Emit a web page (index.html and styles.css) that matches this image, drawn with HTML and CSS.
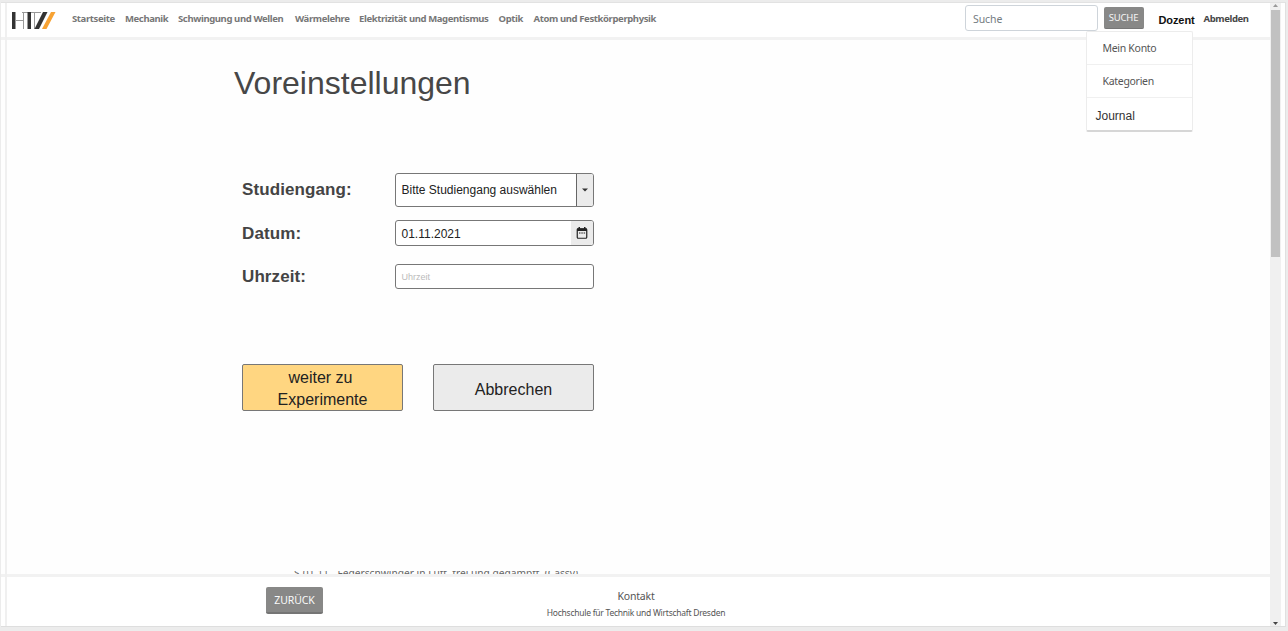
FILE: index.html
```html
<!DOCTYPE html>
<html lang="de">
<head>
<meta charset="utf-8">
<title>Voreinstellungen</title>
<link rel="stylesheet" href="styles.css">
</head>
<body>
<div class="window">
  <div class="gutter"></div>
  <div class="page">
    <header class="header">
      <svg class="logo" width="44" height="18" viewBox="0 0 44 18">
        <path d="M0 0h3.500v17H0z" fill="#333"/>
        <path d="M3.500 8.500h8M11.500 0v17M10 .5h6M19 .5h10" fill="none" stroke="#999" stroke-width="1"/>
        <path d="M15.500 0h3.500v17h-3.500z" fill="#333"/>
        <path d="M22.500 0v17" stroke="#999" stroke-width="1"/>
        <path d="M31 0h4.500L27 17h-4.500z" fill="#333"/>
        <path d="M39 0h4.500L34.500 17H30z" fill="#f7a233"/>
      </svg>
      <nav class="nav">
        <a class="n1">Startseite</a><a class="n2">Mechanik</a><a class="n3">Schwingung und Wellen</a><a class="n4">Wärmelehre</a><a class="n5">Elektrizität und Magentismus</a><a class="n6">Optik</a><a class="n7">Atom und Festkörperphysik</a>
      </nav>
      <div class="search">Suche</div>
      <div class="search-btn">SUCHE</div>
      <div class="account">
        <span class="dozent">Dozent</span>
        <div class="menu">
          <div class="item">Mein Konto</div>
          <div class="item">Kategorien</div>
          <div class="item journal">Journal</div>
        </div>
      </div>
      <a class="logout">Abmelden</a>
    </header>
    <main class="main">
      <h1 class="title">Voreinstellungen</h1>
      <div class="row row-course">
        <span class="label">Studiengang:</span>
        <div class="field select"><span class="value">Bitte Studiengang auswählen</span><span class="arrow"><svg width="6" height="4" viewBox="0 0 6 4"><path d="M0 .5h6L3 3.500z" fill="#333"/></svg></span></div>
      </div>
      <div class="row row-date">
        <span class="label">Datum:</span>
        <div class="field date"><span class="value">01.11.2021</span><span class="cal"><svg width="12" height="12" viewBox="0 0 12 12"><rect x="1.250" y="1.750" width="9.500" height="9.500" rx="1" fill="none" stroke="#222" stroke-width="1.200"/><path d="M1 1.500h10V4H1zM2.500 0h1.500v2H2.500zM8 0h1.500v2H8z" fill="#222"/><path d="M3 6h1.500M5.300 6h1.500M7.600 6h1.500" stroke="#222" stroke-width="1.200"/></svg></span></div>
      </div>
      <div class="row row-time">
        <span class="label">Uhrzeit:</span>
        <div class="field time"><span class="placeholder">Uhrzeit</span></div>
      </div>
      <div class="actions">
        <div class="btn primary"><span class="first">weiter zu</span><span>Experimente</span></div>
        <div class="btn cancel">Abbrechen</div>
      </div>
      <div class="entry">S-01.11 - Federschwinger in Luft, frei und gedämpft, (Cassy)</div>
    </main>
    <footer class="footer">
      <div class="back">ZURÜCK</div>
      <div class="contact">
        <span class="kontakt">Kontakt</span>
        <span class="school">Hochschule für Technik und Wirtschaft Dresden</span>
      </div>
    </footer>
  </div>
  <div class="scrollbar">
    <svg width="5" height="3" viewBox="0 0 5 3"><path d="M0 3h5L2.500 0z" fill="#999"/></svg>
    <div class="thumb"></div>
    <svg class="down" width="5" height="3" viewBox="0 0 5 3"><path d="M0 0h5L2.500 3z" fill="#444"/></svg>
  </div>
</div>
</body>
</html>
```

FILE: styles.css
```css
* { box-sizing: border-box; }
body {
  margin: 0;
  width: 1288px;
  height: 631px;
  overflow: hidden;
  background: #ececec;
  padding: 2px 2px 4px 1px;
  font-family: "Noto Sans", "Open Sans", sans-serif;
  white-space: nowrap;
}
.window {
  display: flex;
  height: 625px;
  background: #fefefe;
  border-top: 1px solid #e2e2e2;
  border-bottom: 1px solid #dedede;
  border-right: 1px solid #e0e0e0;
}
.gutter {
  width: 6px;
  border-right: 2px solid #f0f0f0;
  background: linear-gradient(#fff 34px, #f2f2f2 34px 37px, #fefefe 37px 571px, #f2f2f2 571px 574px, #fff 574px);
}
.page {
  width: 1263px;
  display: flex;
  flex-direction: column;
}
.header {
  height: 37px;
  flex: none;
  display: flex;
  align-items: flex-start;
  border-bottom: 3px solid #f2f2f2;
  padding-left: 5px;
  background: #fff;
}
.logo { margin-top: 9px; flex: none; }
.nav {
  display: flex;
  width: 909px;
  padding: 8px 0 0 16px;
  font-size: 9.5px;
  line-height: 16px;
  font-weight: 700;
  letter-spacing: -0.38px;
  color: #777;
}
.nav a { flex: none; }
.n1 { width: 53px; }
.n2 { width: 53px; }
.n3 { width: 117px; }
.n4 { width: 64px; }
.n5 { width: 139.500px; }
.n6 { width: 35px; }
.search {
  width: 133px;
  height: 26px;
  margin-top: 2px;
  border: 1px solid #ced4da;
  border-radius: 3px;
  padding-left: 7px;
  font-size: 10.5px;
  line-height: 26px;
  letter-spacing: -0.1px;
  color: #747b81;
}
.search-btn {
  width: 40px;
  height: 22px;
  margin: 4px 0 0 5.500px;
  border-radius: 2px;
  border-bottom: 1px solid #777;
  background: #888887;
  color: #f5f5f5;
  font-size: 9.5px;
  line-height: 21px;
  letter-spacing: -0.2px;
  text-align: center;
}
.account {
  position: relative;
  width: 60px;
  padding: 8px 0 0 15px;
  font: 700 11px/18px "Liberation Sans", Arial, sans-serif;
  letter-spacing: -0.1px;
  color: #111;
}
.menu {
  position: absolute;
  left: -58px;
  top: 28px;
  width: 107px;
  height: 101px;
  background: #fff;
  border: 1px solid #ececec;
  border-bottom: 2px solid #d6d6d6;
  border-radius: 2px;
  font: 10.5px/33px "Noto Sans", sans-serif;
  letter-spacing: -0.3px;
  color: #555;
}
.item {
  height: 33px;
  padding-left: 16px;
  border-bottom: 1px solid #f0f0f0;
}
.journal {
  padding-left: 9px;
  border: 0;
  font: 12px/37px "Liberation Sans", Arial, sans-serif;
  letter-spacing: 0;
  color: #333;
}
.logout {
  padding-top: 8px;
  font-size: 9.5px;
  line-height: 16px;
  font-weight: 700;
  letter-spacing: -0.38px;
  color: #474747;
}
.main {
  height: 534px;
  flex: none;
  display: flex;
  flex-direction: column;
  padding-left: 227px;
  font-family: "Liberation Sans", Arial, sans-serif;
}
.title {
  margin: 22px 0 0;
  height: 42px;
  font-size: 32px;
  line-height: 42px;
  font-weight: 400;
  color: #474747;
}
.row {
  display: flex;
  align-items: center;
  padding-left: 8px;
}
.row-course { margin-top: 69px; height: 34px; }
.row-date { margin-top: 13px; height: 27px; }
.row-time { margin-top: 18px; height: 25px; }
.label {
  width: 153px;
  font-size: 17px;
  font-weight: 700;
  letter-spacing: 0.1px;
  color: #444;
}
.row-date .label, .row-date .value { padding-top: 2px; }
.field {
  display: flex;
  align-items: center;
  justify-content: space-between;
  width: 199px;
  height: 100%;
  border: 1px solid #777;
  border-radius: 3px;
  overflow: hidden;
  background: #fff;
  padding-left: 5.500px;
  color: #222;
}
.value { font-size: 12px; }
.arrow, .cal {
  display: flex;
  align-items: center;
  justify-content: center;
  height: 100%;
  background: #ebebeb;
}
.arrow { width: 17px; border-left: 1px solid #666; }
.cal { width: 22px; padding-right: 1px; }
.placeholder { font-size: 9px; color: #bbb; }
.actions {
  display: flex;
  gap: 30px;
  padding-left: 8px;
  margin-top: 75px;
}
.btn {
  display: flex;
  flex-direction: column;
  align-items: center;
  justify-content: center;
  width: 161px;
  height: 47px;
  border: 1px solid #777;
  border-radius: 2px;
  background: #ebebeb;
  font-size: 16px;
  line-height: 22px;
  padding-top: 2px;
  color: #222;
}
.primary { background: #ffd681; }
.first { padding-right: 4px; }
.cancel { padding-top: 4px; }
.entry {
  width: 400px;
  margin-top: 160px;
  height: 3px;
  overflow: hidden;
  padding-left: 60px;
  font: 10.2px/5px "Noto Sans", sans-serif;
  color: #666;
}
.footer {
  flex: 1;
  display: flex;
  border-top: 3px solid #f2f2f2;
  padding-left: 259px;
  background: #fff;
}
.back {
  width: 57px;
  height: 27px;
  margin-top: 10px;
  border-radius: 2px;
  border-bottom: 2px solid #757575;
  background: #888887;
  color: #fafafa;
  font-size: 10.5px;
  line-height: 26px;
  letter-spacing: -0.1px;
  text-align: center;
}
.contact {
  display: flex;
  flex-direction: column;
  align-items: center;
  width: 180px;
  margin-left: 223px;
  padding-top: 10px;
  color: #555;
}
.kontakt { font-size: 10.5px; line-height: 18px; letter-spacing: -0.2px; }
.school { font-size: 8.5px; line-height: 16px; letter-spacing: -0.25px; }
.scrollbar {
  width: 11px;
  display: flex;
  flex-direction: column;
  align-items: center;
  background: #f0f0f0;
  padding: 1px 0 1px;
}
.scrollbar svg { display: block; flex: none; }
.thumb {
  width: 9px;
  height: 247px;
  margin-top: 3px;
  background: #c1c1c1;
}
.down { margin-top: auto; }
```
